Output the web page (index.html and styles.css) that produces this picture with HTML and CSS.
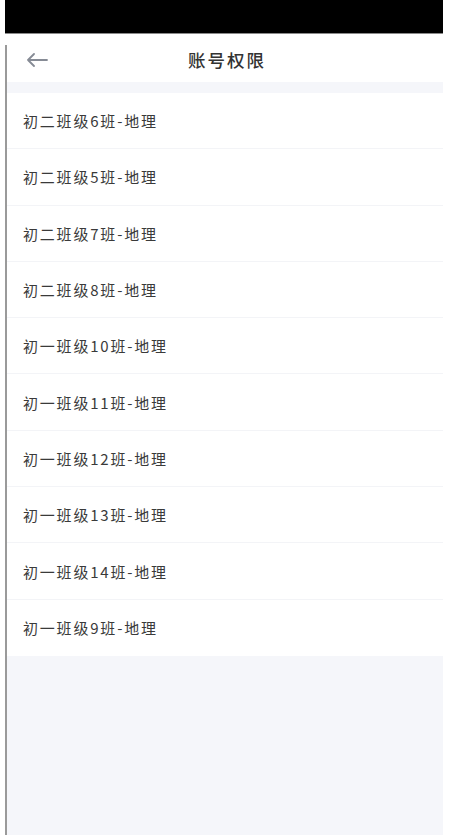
FILE: index.html
```html
<!DOCTYPE html>
<html lang="zh">
<head>
<meta charset="utf-8">
<title>账号权限</title>
<link rel="stylesheet" href="styles.css">
</head>
<body>
<div class="screen">
  <div class="statusbar"></div>
  <div class="frame">
    <header class="navbar">
      <span class="back">
        <svg width="22" height="14" viewBox="0 0 22 14" fill="none" stroke="#868b95" stroke-width="1.8" stroke-linecap="round" stroke-linejoin="round">
          <path d="M21 7H2M8 1L2 7l6 6"/>
        </svg>
      </span>
      <h1 class="title">账号权限</h1>
    </header>
    <div class="gap"></div>
    <ul class="list">
      <li class="row">初二班级6班-地理</li>
      <li class="row">初二班级5班-地理</li>
      <li class="row">初二班级7班-地理</li>
      <li class="row">初二班级8班-地理</li>
      <li class="row">初一班级10班-地理</li>
      <li class="row">初一班级11班-地理</li>
      <li class="row">初一班级12班-地理</li>
      <li class="row">初一班级13班-地理</li>
      <li class="row">初一班级14班-地理</li>
      <li class="row">初一班级9班-地理</li>
    </ul>
    <div class="rest"></div>
  </div>
</div>
</body>
</html>
```
FILE: styles.css
```css
html, body {
  margin: 0;
  padding: 0;
  background: #ffffff;
}
body {
  font-family: "Noto Sans CJK SC", "Noto Sans", sans-serif;
  width: 450px;
  height: 835px;
  overflow: hidden;
}
.screen {
  display: flex;
  flex-direction: column;
  height: 835px;
}
.statusbar {
  margin-left: 5px;
  width: 438px;
  height: 33px;
  background: #000;
  border-bottom: 1px solid #8a8a8a;
  flex: none;
}
.frame {
  position: relative;
  margin-left: 5px;
  width: 438px;
  flex: 1;
  display: flex;
  flex-direction: column;
  padding-left: 2px;
  box-sizing: border-box;
}
.frame::before {
  content: "";
  position: absolute;
  left: 0;
  top: 11px;
  bottom: 0;
  width: 2px;
  background: #9a9a9a;
}
.navbar {
  height: 48px;
  display: flex;
  align-items: center;
  justify-content: center;
  position: relative;
  background: #fff;
  flex: none;
}
.back {
  position: absolute;
  left: 19px;
  top: 19px;
  display: flex;
}
.title {
  margin: 0;
  font-size: 17.5px;
  font-weight: 500;
  color: #333;
  letter-spacing: 2px;
  padding-left: 4px;
  margin-top: 2px;
}
.gap {
  height: 11px;
  background: #f5f6fa;
  flex: none;
}
.list {
  list-style: none;
  margin: 0;
  padding: 0;
  background: #fff;
  flex: none;
}
.row {
  height: 56.3px;
  box-sizing: border-box;
  display: flex;
  align-items: center;
  padding-left: 16px;
  font-size: 15px;
  letter-spacing: 1.8px;
  color: #3a3a3a;
  border-bottom: 1px solid #f3f4f7;
}
.row:last-child {
  border-bottom: none;
}
.rest {
  flex: 1;
  background: #f5f6fa;
}
```
